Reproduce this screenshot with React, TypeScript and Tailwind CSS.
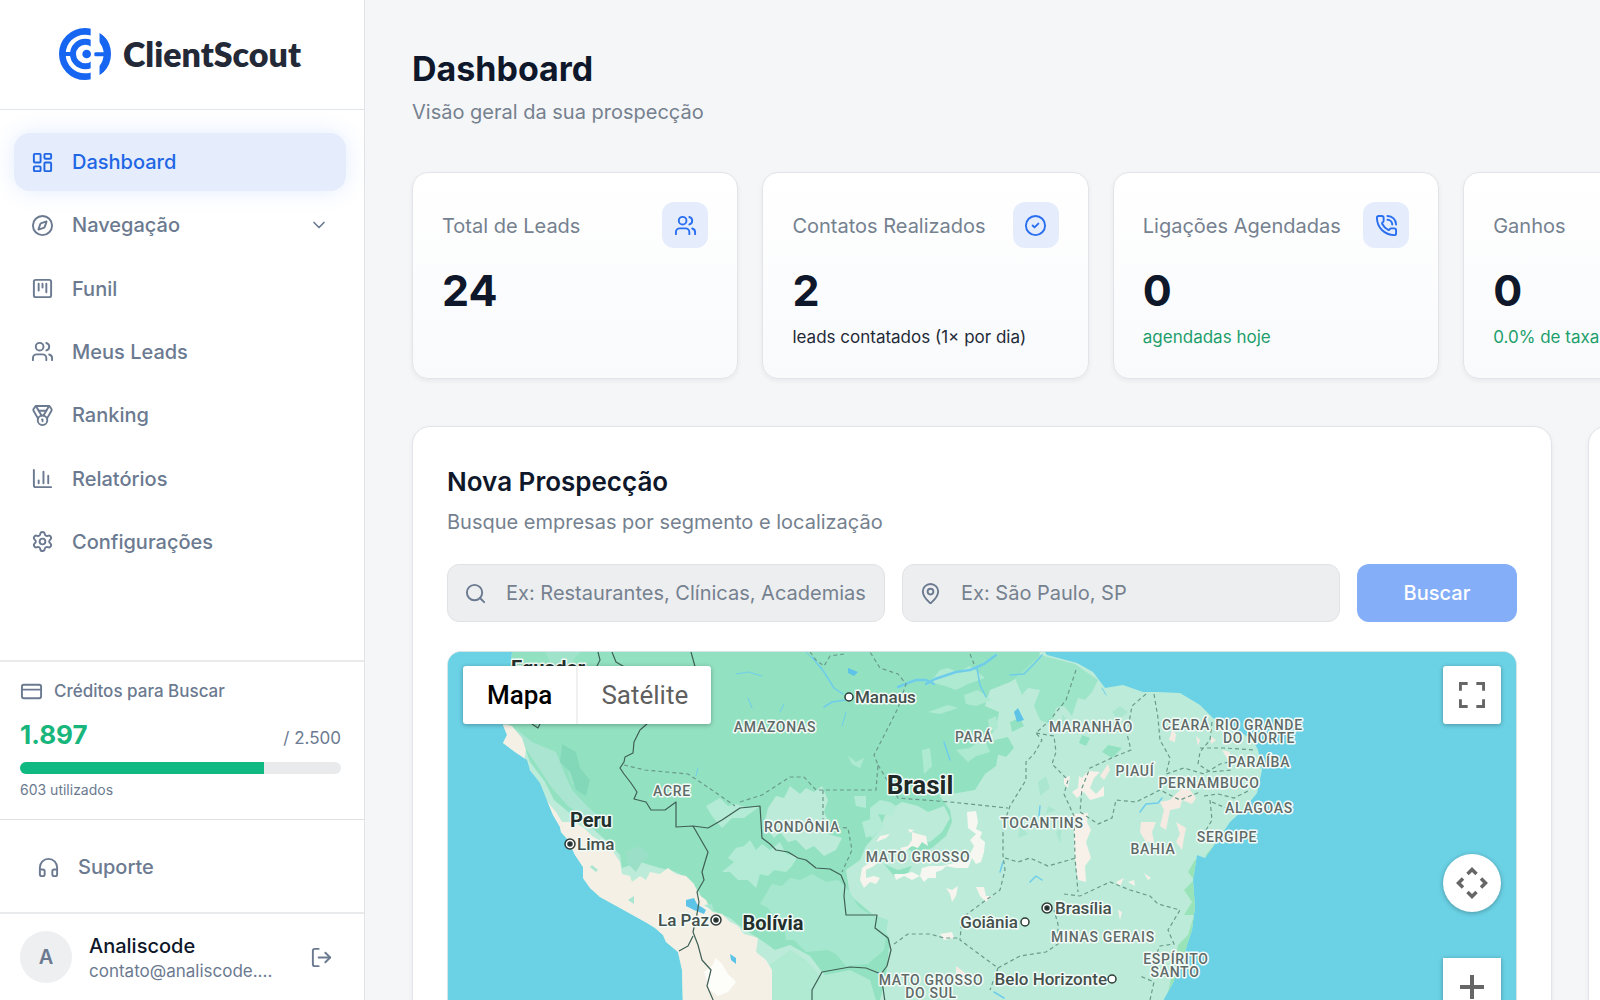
import React from 'react';
import {
    ChartColumn,
    ChevronDown,
    CircleCheck,
    Compass,
    CreditCard,
    Headphones,
    LayoutDashboard,
    LogOut,
    MapPin,
    Medal,
    PhoneCall,
    Search,
    Settings,
    SquareKanban,
    Users,
    type LucideIcon,
} from 'lucide-react';

// --- DATA ---

interface NavItem {
    label: string;
    icon: LucideIcon;
    active?: boolean;
    expandable?: boolean;
}

const navItems: NavItem[] = [
    { label: 'Dashboard', icon: LayoutDashboard, active: true },
    { label: 'Navegação', icon: Compass, expandable: true },
    { label: 'Funil', icon: SquareKanban },
    { label: 'Meus Leads', icon: Users },
    { label: 'Ranking', icon: Medal },
    { label: 'Relatórios', icon: ChartColumn },
    { label: 'Configurações', icon: Settings },
];

interface Stat {
    label: string;
    value: string;
    icon?: LucideIcon;
    note?: string;
    positive?: boolean;
}

const stats: Stat[] = [
    { label: 'Total de Leads', value: '24', icon: Users },
    { label: 'Contatos Realizados', value: '2', icon: CircleCheck, note: 'leads contatados (1× por dia)' },
    { label: 'Ligações Agendadas', value: '0', icon: PhoneCall, note: 'agendadas hoje', positive: true },
    { label: 'Ganhos', value: '0', note: '0.0% de taxa', positive: true },
];

const credits = { available: 1897, total: 2500 };

const formatNumber = (value: number) => value.toString().replace(/\B(?=(\d{3})+$)/g, '.');

// --- LOGO ---

const Logo = () => (
    <a href="#" className="flex items-center gap-3">
        <svg viewBox="0 0 156 156" className="size-[52px] text-[#1766f2]">
            <defs>
                <clipPath id="logoLeft"><rect x="0" y="0" width="95" height="156" /></clipPath>
                <clipPath id="logoRight"><path d="M121 14L156 40V116L121 142Z" /></clipPath>
            </defs>
            <g clipPath="url(#logoLeft)" fill="none" stroke="currentColor">
                <circle cx="78" cy="78" r="68" strokeWidth="20" />
                <circle cx="79" cy="78" r="37" strokeWidth="18" />
            </g>
            <circle cx="78" cy="78" r="67" strokeWidth="22" fill="none" stroke="currentColor" clipPath="url(#logoRight)" />
            <circle cx="83" cy="78" r="13" fill="currentColor" />
            <rect x="14" y="72" width="34" height="12" fill="currentColor" />
            <rect x="106" y="73" width="38" height="12" rx="4" fill="currentColor" />
        </svg>
        <span className="font-[Lato] text-[34px] leading-10 font-extrabold text-[#242938]">ClientScout</span>
    </a>
);

// --- SIDEBAR ---

const Sidebar = () => {
    const used = credits.total - credits.available;

    return (
        <aside className="flex w-[365px] shrink-0 flex-col border-r border-[#e0e3e7] bg-white text-[#6b7a90]">
            <div className="flex h-[110px] items-center justify-center border-b border-[#e0e5e9] pr-1 pb-px">
                <Logo />
            </div>

            <nav className="flex-1 pt-[23px] pr-[18px] pl-[14px]">
                <ul className="flex h-[438px] flex-col justify-between">
                    {navItems.map(({ label, icon: Icon, active, expandable }) => (
                        <li key={label}>
                            <a
                                href="#"
                                className={`flex h-[58px] items-center gap-[18px] rounded-2xl px-[17px] text-[20px] font-medium ${
                                    active ? 'bg-[#e5ecfc] text-[#1f66e5] shadow-[0_0_22px_rgba(59,130,246,0.15)]' : ''
                                }`}
                            >
                                <Icon size={23} strokeWidth={2} />
                                <span className="flex-1">{label}</span>
                                {expandable && <ChevronDown size={20} strokeWidth={2} />}
                            </a>
                        </li>
                    ))}
                </ul>
            </nav>

            <section className="border-t-2 border-[#e9eaec] px-5 pt-4 pb-[17px]">
                <h2 className="flex items-center gap-[11px] text-[17px] leading-[26px] font-medium">
                    <CreditCard size={23} strokeWidth={2} />
                    Créditos para Buscar
                </h2>
                <div className="mt-[13px] flex items-baseline justify-between pr-[3px]">
                    <span className="text-[26px] leading-[36px] font-bold text-[#18b67c]">{formatNumber(credits.available)}</span>
                    <span className="text-[17px]">/ {formatNumber(credits.total)}</span>
                </div>
                <div className="mt-[9px] mr-[3px] h-3 overflow-hidden rounded-full bg-[#e9eaec]">
                    <div className="h-full bg-[#10b981]" style={{ width: `${(credits.available / credits.total) * 100}%` }} />
                </div>
                <p className="mt-1 text-[14px] leading-[24px]">{used} utilizados</p>
            </section>

            <div className="border-t border-[#dfe2e5] px-5 pt-[18px] pb-4">
                <a href="#" className="flex h-[58px] items-center gap-[18px] px-[17px] text-[20px] font-medium">
                    <Headphones size={23} strokeWidth={2} />
                    Suporte
                </a>
            </div>

            <footer className="flex items-center gap-[17px] border-t-2 border-[#e9eaec] py-[17px] pr-[31px] pl-5">
                <span className="flex size-[52px] items-center justify-center rounded-full bg-[#eeeff1] text-[20px] font-semibold">A</span>
                <div className="min-w-0 flex-1 pt-[2px]">
                    <p className="text-[20px] leading-[26px] font-medium text-[#0f172a]">Analiscode</p>
                    <p className="text-[17px] leading-[24px]">contato@analiscode....</p>
                </div>
                <button type="button" aria-label="Sair">
                    <LogOut size={23} strokeWidth={2} />
                </button>
            </footer>
        </aside>
    );
};

// --- STAT CARD ---

const StatCard: React.FC<Stat> = ({ label, value, icon: Icon, note, positive }) => (
    <div className="h-[207px] rounded-2xl border border-[#e1e4e8] bg-linear-to-b from-white to-[#f9fafc] px-[29px] pt-[29px] shadow-[0_2px_5px_rgba(15,23,42,0.06)]">
        <div className="flex h-[46px] items-center justify-between">
            <span className="pt-[2px] text-[20px] text-[#75818f]">{label}</span>
            {Icon && (
                <span className="flex size-[46px] items-center justify-center rounded-xl bg-[#e5edfd] text-[#2a6ff0]">
                    <Icon size={23} strokeWidth={2} />
                </span>
            )}
        </div>
        <p className="mt-4 text-[43px] leading-[52px] font-bold text-[#0f172a]">{value}</p>
        {note && <p className={`mt-2 text-[17px] leading-[26px] ${positive ? 'text-[#1c9f6c]' : 'text-[#1f2937]'}`}>{note}</p>}
    </div>
);

// --- MAP ---

interface PlaceLabel {
    text: string;
    x: number;
    y: number;
}

const countries: PlaceLabel[] = [
    { text: 'Equador', x: 548, y: 675 },
    { text: 'Peru', x: 591, y: 827 },
    { text: 'Bolívia', x: 773, y: 930 },
];

const states: PlaceLabel[] = [
    { text: 'AMAZONAS', x: 775, y: 732 },
    { text: 'ACRE', x: 672, y: 796 },
    { text: 'RONDÔNIA', x: 802, y: 832 },
    { text: 'PARÁ', x: 974, y: 742 },
    { text: 'MARANHÃO', x: 1091, y: 732 },
    { text: 'CEARÁ', x: 1186, y: 730 },
    { text: 'RIO GRANDE', x: 1259, y: 730 },
    { text: 'DO NORTE', x: 1259, y: 743 },
    { text: 'PIAUÍ', x: 1135, y: 776 },
    { text: 'PARAÍBA', x: 1259, y: 767 },
    { text: 'PERNAMBUCO', x: 1209, y: 788 },
    { text: 'ALAGOAS', x: 1259, y: 813 },
    { text: 'SERGIPE', x: 1227, y: 842 },
    { text: 'BAHIA', x: 1153, y: 854 },
    { text: 'TOCANTINS', x: 1042, y: 828 },
    { text: 'MATO GROSSO', x: 918, y: 862 },
    { text: 'MINAS GERAIS', x: 1103, y: 942 },
    { text: 'ESPÍRITO', x: 1176, y: 964 },
    { text: 'SANTO', x: 1175, y: 977 },
    { text: 'MATO GROSSO', x: 931, y: 985 },
    { text: 'DO SUL', x: 931, y: 998 },
];

interface City extends PlaceLabel {
    cx: number;
    capital?: boolean;
    before?: boolean;
}

const cities: City[] = [
    { text: 'Manaus', x: 855, y: 703, cx: 849 },
    { text: 'Lima', x: 577, y: 850, cx: 570, capital: true },
    { text: 'La Paz', x: 709, y: 926, cx: 716, capital: true, before: true },
    { text: 'Brasília', x: 1055, y: 914, cx: 1047, capital: true },
    { text: 'Goiânia', x: 1018, y: 928, cx: 1025, before: true },
    { text: 'Belo Horizonte', x: 1107, y: 985, cx: 1112, before: true },
];

const MapCanvas = () => (
    <svg viewBox="448 652 1068 348" className="w-full">
        <defs>
            <clipPath id="land">
                <path d="M513 640 L508 700 503 725 507 735 503 743 515 752 527 760 530 770 540 783 548 803 553 815 560 827 561 832 568 840 575 855 583 867 583 878 590 888 600 897 620 908 647 923 655 928 663 935 666 942 678 952 682 970 683 1010 H1158 L1173 983 1183 960 1187 945 1192 930 1195 907 1193 880 1197 855 1205 858 1220 837 1230 822 1245 808 1257 793 1262 770 1258 750 1253 740 1237 730 1213 718 1200 705 1180 693 1157 692 1143 692 1123 685 1105 688 1093 672 1077 663 1047 655 1037 640Z" />
            </clipPath>
        </defs>
        <rect x="440" y="640" width="1090" height="370" fill="#6bd2e6" />

        <g clipPath="url(#land)">
            <rect x="440" y="640" width="840" height="370" fill="#bcecd9" />

            {/* Dense forest */}
            <path d="M505 640 L507 722 522 740 530 762 545 782 554 800 572 815 592 828 608 842 620 855 622 868 640 862 660 868 676 872 690 880 700 893 703 905 716 912 730 918 745 930 758 938 775 950 790 945 810 956 822 972 835 985 850 1000 880 1000 886 975 890 940 882 925 872 914 850 895 846 870 860 860 866 846 880 830 886 812 902 802 918 806 928 812 944 806 950 818 942 832 930 842 916 840 906 848 916 854 932 848 946 836 952 822 950 810 940 796 975 790 985 774 996 766 1000 745 990 736 996 728 999 712 985 706 990 690 1010 682 1030 670 1040 654 1037 640Z" fill="#92e2c2" />
            <path d="M1040 655 L1075 664 1098 680 1092 692 1085 700 1078 698 1072 716 1064 706 1056 708 1052 725 1040 720 1034 706 1040 690 1028 688 1022 695 1015 678Z" fill="#9de5c8" />
            <path d="M995 740 L1008 737 1014 748 1006 757 996 754Z M1010 722 L1020 718 1024 726 1012 732Z M1082 735 L1090 738 1086 746 1079 743Z M1108 745 L1122 748 1112 758 1102 752Z M884 864 L898 870 912 866 906 876 894 876Z" fill="#92e2c2" />
            <path d="M1195 860 L1188 872 1194 880 1184 890 1192 902 1184 915 1194 915 1188 935 1178 945 1172 975 1166 1000 1200 1000 1200 860Z M1221 832 L1214 845 1205 856 1210 860 1228 835Z" fill="#98e3b8" />
            <path d="M1038 782 L1046 776 1050 788 1040 796Z M1056 832 L1062 828 1060 844Z M1020 826 L1028 834 1018 838Z M1120 706 L1128 712 1118 720 1112 712Z M1062 714 L1070 722 1062 728Z M1048 806 L1056 810 1046 814Z" fill="#abe7d0" />

            {/* Lighter woodland */}
            <path d="M515 728 L532 742 556 752 564 772 572 790 586 805 602 820 586 818 568 806 552 788 540 770 528 752Z" fill="#a9e5d1" />
            <path d="M768 808 L776 796 784 798 790 786 800 794 806 788 814 792 822 786 828 800 824 812 830 824 828 834 842 838 836 850 824 856 814 846 806 850 796 840 788 842 780 832 774 838 764 824Z" fill="#bcecd9" />
            <path d="M736 848 L744 846 750 840 756 850 762 844 770 850 780 842 786 854 798 856 792 866 786 872 774 870 768 876 760 874 756 888 748 880 738 880 730 872 722 872 734 862 728 858Z M706 806 L720 798 728 806 736 804 748 808 760 806 744 818 732 818 722 828 712 816Z" fill="#b4ebd6" />
            <path d="M772 884 L782 886 790 878 800 880 812 874 826 882 838 880 850 892 858 906 866 912 888 920 884 950 868 964 846 966 836 954 828 950 806 952 794 940 786 940 784 926 776 920 768 908 760 904Z" fill="#a6e7cf" />
            <path d="M790 950 L806 960 820 976 850 970 870 980 876 1000 772 1000 768 966Z" fill="#b0ead3" />
            <path d="M870 808 L880 800 890 802 896 806 892 816 878 814 884 826 872 838 866 830 870 820Z M854 796 L866 796 866 808 856 806Z M862 822 L874 818 876 834 866 838Z" fill="#b4ebd6" />
            <path d="M930 682 L940 670 948 668 958 672 970 666 985 678 968 684 956 690 945 686Z M964 695 L978 690 992 700 976 706 966 704Z M928 712 L948 705 958 708 940 714Z M922 750 L930 748 932 766 924 774Z M848 756 L856 762 864 758 860 768 852 764Z M988 720 L996 716 998 728 990 732Z M956 750 L970 748 984 738 990 752 976 756 968 762Z" fill="#aeead2" />
            <path d="M545 652 L580 652 570 664 556 672Z M566 766 L584 776 586 790 572 784Z" fill="#9fe4ca" />
            <path d="M562 744 L576 752 580 768 590 780 586 796 576 790 570 772 560 762Z M568 668 L586 664 590 672Z" fill="#84d8ba" />

            {/* Andes and coastal desert */}
            <path d="M500 724 L512 726 522 738 526 750 524 762 532 772 540 786 546 800 556 812 562 822 574 822 584 828 592 836 602 842 612 850 620 862 622 874 630 876 632 882 640 876 646 880 650 872 660 874 668 868 676 874 686 876 694 884 698 894 706 900 712 912 722 914 730 922 738 926 744 934 758 938 756 952 766 960 772 970 772 1010 670 1010 640 940 590 900 560 840 540 800 495 750Z" fill="#f4f0e6" />
            <path d="M704 972 L712 966 716 958 722 964 728 974 736 982 728 992 718 996 710 990Z" fill="#fdfdfa" />
            <path d="M598 870 L592 865 590 867 596 872Z M628 900 L634 896 634 904Z M704 905 L714 912 712 904Z" fill="#a9e5d1" />
            <path d="M626 852 L640 846 650 856 642 862 636 872 628 864Z" fill="#9cdfc8" />

            {/* Cerrado clearings */}
            <path d="M967 812 L976 811 978 822 976 829 982 832 980 838 985 842 984 852 981 862 976 864 972 858 968 868 956 868 946 866 942 870 936 872 936 878 928 878 924 882 920 876 912 880 904 876 896 880 894 874 904 874 912 872 920 876 922 868 930 866 942 866 958 862 970 854 974 846 970 840 976 834 968 828Z" fill="#f6f7f1" />
            <path d="M862 868 L870 862 880 860 874 866 866 870 866 878 874 876 880 878 876 884 870 882 864 888 860 880Z M900 848 L908 846 912 840 912 832 918 834 926 836 928 846 922 842 918 848 912 846 904 852Z M876 842 L880 836 890 834 886 838Z M908 829 L914 830 910 833Z M946 888 L952 890 958 886 956 896 952 902 950 894Z M976 887 L984 887 986 896 992 896 986 902 980 896Z M940 934 L952 932 954 938 944 940Z" fill="#f6f4ec" />
            <path d="M1082 778 L1088 771 1100 772 1094 778 1090 788 1096 794 1104 786 1104 796 1090 800 1084 792 1077 798 1072 792 1078 788 1079 776Z M1064 778 L1070 776 1068 788 1064 784Z M1074 814 L1088 813 1087 822 1091 830 1086 842 1091 858 1085 866 1086 882 1078 880 1075 860 1074 840Z M1116 882 L1124 878 1120 886Z M1128 882 L1134 880 1135 886Z M1144 873 L1151 878 1148 880Z M1118 910 L1122 912 1120 920Z" fill="#f7f1ea" />
            <path d="M1160 802 L1170 800 1176 794 1182 788 1190 790 1196 798 1192 804 1182 800 1180 808 1170 810 1168 820 1166 830 1160 826 1164 810Z M1141 822 L1156 822 1152 832 1154 842 1146 842 1140 832Z M1176 822 L1186 828 1184 838 1182 850 1176 842 1180 834Z M1172 730 L1176 734 1175 742 1169 740Z M1196 736 L1200 740 1198 746Z M1210 736 L1216 740 1211 744Z M1222 750 L1230 752 1228 760Z M956 966 L964 972 972 984 966 986 956 978Z M1108 764 L1100 776 1104 780 1110 770Z" fill="#f5ebe3" />

            {/* Rivers and lakes */}
            <g fill="none" stroke="#6fcdea" strokeWidth="1.500" strokeLinecap="round" strokeLinejoin="round">
                <path d="M812 657 L824 672 834 688 843 694 M824 707 L832 702 845 700" />
                <path d="M898 687 L908 683 916 680 926 680 934 684 M926 684 L935 679 944 676 956 672 970 670 984 664 996 655" strokeWidth="2.500" />
                <path d="M977 668 L980 685 986 697 M1010 675 L1024 674 1034 664 1042 655 M1140 812 L1146 804 1158 803 1162 798 M1039 816 L1040 806 M1000 872 L1003 862 M1030 882 L1036 876 1042 880 M944 742 L950 760 M994 992 L1004 998" />
                <path d="M736 674 L748 672 762 676 M806 652 L822 668 M748 698 L752 708 M698 768 L696 776 M780 712 L784 704 M846 712 L842 726 M1102 688 L1106 695" strokeWidth="1" />
            </g>
            <path d="M1018 708 L1024 720 1017 722 1014 712Z M686 900 L694 898 697 904 706 910 704 914 694 910 686 906Z M730 954 L736 958 736 964 731 960Z M848 668 L858 672 854 676 848 673Z" fill="#5dc4e8" />
        </g>

        {/* State borders */}
        <g fill="none" stroke="#6a9a8b" strokeWidth="1.200" strokeDasharray="4 3">
            <path d="M624 765 L645 770 688 774 706 786 735 806 M740 802 L762 795 776 786 790 777 804 777 816 790 876 790 878 765 874 755 890 724 898 708 906 684 898 674 880 668 870 652 M823 790 L823 826 848 828 852 850 842 872" />
            <path d="M878 765 L898 798 950 802 1008 808 M1076 670 L1066 700 1050 720 1036 733 1042 740 1034 754 1026 762 1026 780 1010 806 1003 826 1003 856 1005 870 1000 890 986 900 962 918 960 940 998 968 M1005 858 L1018 862 1030 858 1048 866 1076 858 M1036 733 L1054 736 1056 752 1052 764 1068 780 1064 794 1074 816 1075 858 1078 892 M970 654 L974 664" />
            <path d="M1146 694 L1132 706 1127 734 1131 750 1116 756 1090 768 1082 788 1080 812 1098 824 1112 818 1116 800 1136 802 1160 790 1180 800 1200 792 M1154 694 L1158 718 1160 740 1170 758 1166 774 1184 768 1204 774 1220 764 1238 760 M1212 722 L1210 740 1200 752 1198 764 1210 772 1232 770 M1200 748 L1224 748 1256 750 M1204 796 L1218 794 1234 798 1250 790 M1210 800 L1212 820 1206 830 M1212 802 L1226 808" />
            <path d="M894 944 L908 934 930 934 944 938 960 938 M998 968 L1020 956 1046 952 1058 944 1058 924 1054 910 M1064 894 L1080 896 1110 882 1130 890 1150 896 1158 904 1180 910 1168 930 1174 944 1160 946 1150 968 M998 968 L990 990 M1150 1000 L1154 982 1140 976 M810 652 L816 660 824 666 830 656 844 654" />
        </g>

        {/* Country borders */}
        <g fill="none" stroke="#3f5f55" strokeWidth="1.200" strokeLinejoin="round">
            <path d="M598 652 L600 660 594 672 M612 652 L616 662 640 676 M691 652 L696 670 M648 723 L640 730 634 742 633 753 625 757 624 762 620 768 624 774 631 783 637 792 634 799 646 802 651 810 665 810 676 802 676 827 693 826 708 828 722 820 740 808 760 806 762 838 770 844 776 850 788 852 798 858 806 860 816 868 830 869 841 875 845 885 844 896 846 915 877 915 875 928 888 938 891 950 887 966 881 974 866 968 850 967 822 972 812 990 812 1002 M881 974 L885 1002" />
            <path d="M693 826 L708 852 702 872 704 880 697 892 699 902 697 914 693 932 698 945 702 960 711 970 707 986 714 1002 M693 936 L688 946 679 951 M532 724 L538 728 540 724" />
        </g>

        {/* Labels */}
        <g className="font-[Roboto]" stroke="#f3fbf7" strokeWidth="3" strokeLinejoin="round" paintOrder="stroke">
            {states.map(({ text, x, y }, i) => (
                <text key={i} x={x} y={y} textAnchor="middle" className="text-[14px] font-medium tracking-wider" fill="#5f6b69">{text}</text>
            ))}
            {cities.map(({ text, x, y, before }) => (
                <text key={text} x={x} y={y} textAnchor={before ? 'end' : 'start'} className="text-[17px] font-medium" fill="#43504d">{text}</text>
            ))}
            {countries.map(({ text, x, y }) => (
                <text key={text} x={x} y={y} textAnchor="middle" className="text-[20px] font-bold" fill="#22302d">{text}</text>
            ))}
            <text x="920" y="794" textAnchor="middle" className="text-[26px] font-bold" fill="#1e2927">Brasil</text>
        </g>
        {cities.map(({ text, y, cx, capital }) => (
            <g key={text} stroke="#2d3a37" strokeWidth="1.500">
                <circle cx={cx} cy={y - 6} r={capital ? 5 : 4} fill="#fff" />
                {capital && <circle cx={cx} cy={y - 6} r="2" fill="#1f2b28" />}
            </g>
        ))}
    </svg>
);

const MapView = () => (
    <div className="relative h-[583px] overflow-hidden rounded-[14px] border border-[#d5e5e6] bg-[#6bd2e6]">
        <MapCanvas />

        <div className="absolute top-[14px] left-[15px] flex h-[58px] rounded-[3px] bg-white font-[Roboto] text-[26px] shadow-[0_1px_5px_rgba(0,0,0,0.3)]">
            <button type="button" className="border-r-2 border-[#f0f0f0] px-6 font-medium text-black">Mapa</button>
            <button type="button" className="px-[23px] text-[#5f5f5f]">Satélite</button>
        </div>

        <button type="button" aria-label="Tela cheia" className="absolute top-[14px] right-[15px] flex size-[58px] items-center justify-center rounded-[3px] bg-white shadow-[0_1px_5px_rgba(0,0,0,0.3)]">
            <svg viewBox="0 0 18 18" className="size-[26px]" fill="#666">
                <path d="M0 0v6h2V2h4V0H0zm16 0h-4v2h4v4h2V0h-2zm0 16h-4v2h6v-6h-2v4zM2 12H0v6h6v-2H2v-4z" />
            </svg>
        </button>

        <button type="button" aria-label="Controles da câmera do mapa" className="absolute top-[202px] right-[15px] flex size-[58px] items-center justify-center rounded-full bg-white shadow-[0_1px_5px_rgba(0,0,0,0.3)]">
            <svg viewBox="0 0 32 32" className="size-8" fill="none" stroke="#666" strokeWidth="3.500">
                <path d="M11.500 7 16 2.500l4.500 4.500M11.500 25 16 29.500l4.500-4.500M7 11.500 2.500 16l4.500 4.500M25 11.500 29.500 16l-4.500 4.500" />
            </svg>
        </button>

        <button type="button" aria-label="Aumentar o zoom" className="absolute top-[306px] right-[15px] flex size-[58px] items-center justify-center bg-white shadow-[0_1px_5px_rgba(0,0,0,0.3)]">
            <svg viewBox="0 0 24 24" className="size-6" fill="none" stroke="#666" strokeWidth="4">
                <path d="M12 0v24M0 12h24" />
            </svg>
        </button>
    </div>
);

// --- SEARCH ---

interface SearchFieldProps {
    id: string;
    label: string;
    placeholder: string;
    icon: LucideIcon;
}

const SearchField: React.FC<SearchFieldProps> = ({ id, label, placeholder, icon: Icon }) => (
    <div className="flex h-[58px] flex-1 items-center gap-[19px] rounded-xl border border-[#e0e3e6] bg-[#edeeef] px-4 text-[#6b7a90]">
        <label htmlFor={id} aria-label={label}>
            <Icon size={23} strokeWidth={2} />
        </label>
        <input id={id} type="text" placeholder={placeholder} className="w-full min-w-0 bg-transparent text-[20px] outline-none placeholder:text-[#75818f]" />
    </div>
);

const panelClass = 'rounded-[18px] border border-[#e1e4e8] bg-white shadow-[0_2px_5px_rgba(15,23,42,0.06)]';

export default function App() {
    return (
        <div className="flex h-screen overflow-hidden bg-[#f5f6f8] font-[Inter,sans-serif]">
            <Sidebar />

            <main className="min-w-0 flex-1 overflow-hidden px-[47px] pt-[47px]">
                <div className="min-w-[1728px]">
                    <header>
                        <h1 className="text-[34px] leading-[44px] font-bold text-[#0f172a]">Dashboard</h1>
                        <p className="mt-[3px] text-[20px] leading-[36px] text-[#75818f]">Visão geral da sua prospecção</p>
                    </header>

                    <div className="mt-[42px] grid grid-cols-5 gap-6">
                        {stats.map((stat) => (
                            <StatCard key={stat.label} {...stat} />
                        ))}
                    </div>

                    <div className="mt-[47px] grid grid-cols-3 gap-9">
                        <section className={`col-span-2 px-[34px] py-[35px] ${panelClass}`}>
                            <h2 className="text-[26px] leading-[40px] font-semibold text-[#0f172a]">Nova Prospecção</h2>
                            <p className="mt-[3px] text-[20px] leading-[34px] text-[#75818f]">Busque empresas por segmento e localização</p>

                            <form className="mt-[25px] mb-[29px] flex gap-[17px]">
                                <SearchField id="segment" label="Segmento" placeholder="Ex: Restaurantes, Clínicas, Academias" icon={Search} />
                                <SearchField id="location" label="Localização" placeholder="Ex: São Paulo, SP" icon={MapPin} />
                                <button type="button" className="w-[160px] rounded-xl bg-[#84aef8] text-[20px] font-medium text-white">Buscar</button>
                            </form>

                            <MapView />
                        </section>
                        <section className={panelClass} />
                    </div>
                </div>
            </main>
        </div>
    );
}
